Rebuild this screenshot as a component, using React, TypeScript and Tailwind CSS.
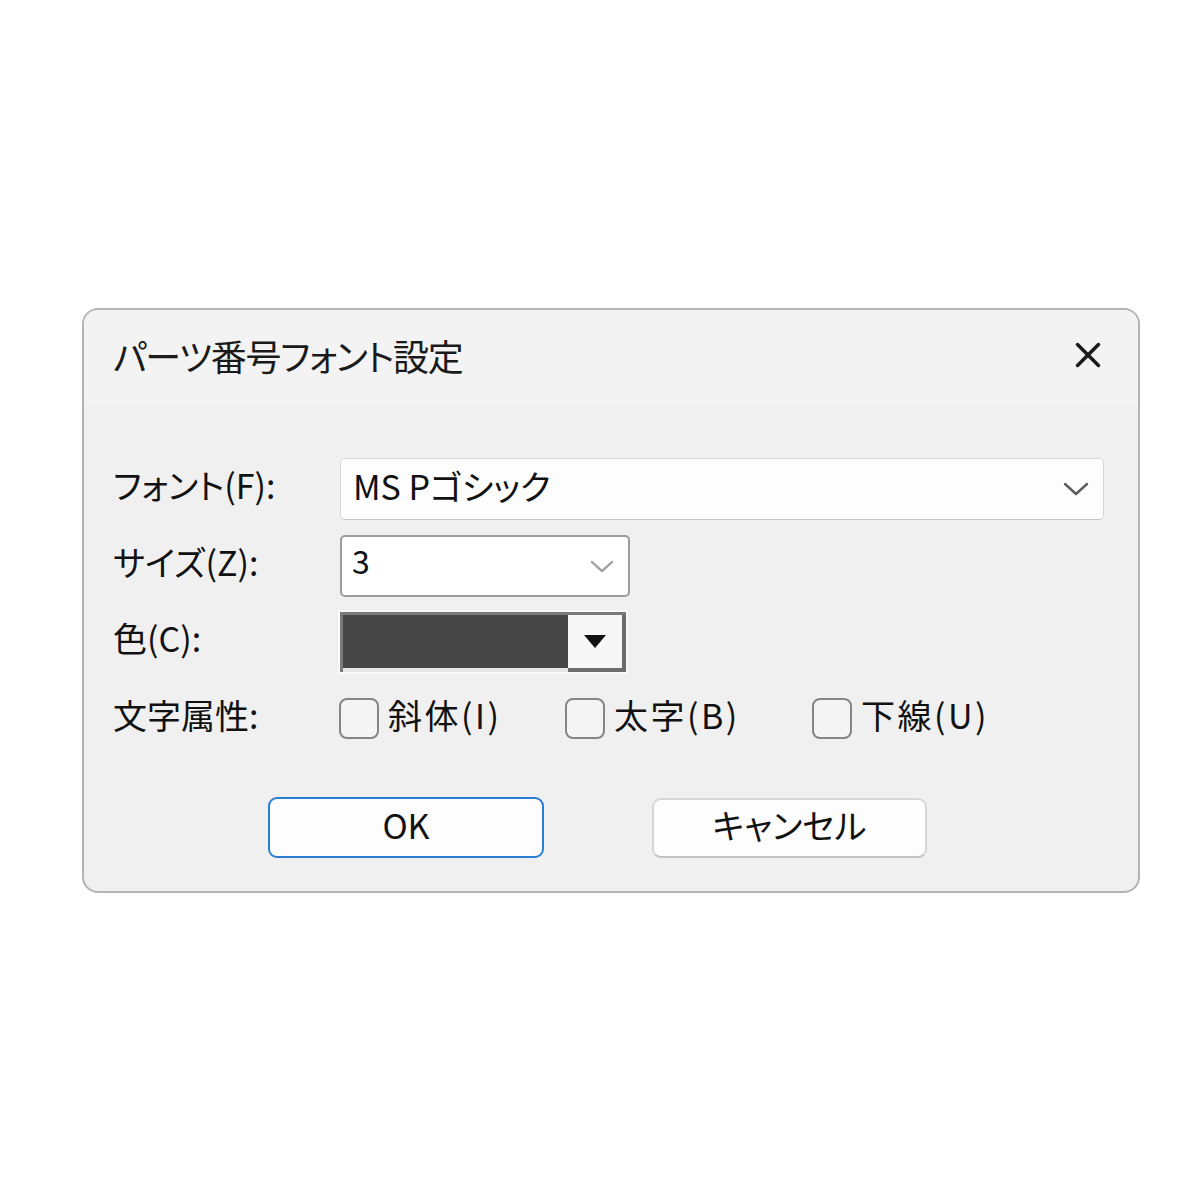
import { X } from 'lucide-react';

const font = { fontFamily: '"Noto Sans CJK JP", "Noto Sans", sans-serif', fontFeatureSettings: '"palt"' };

const Chevron = ({ className }: { className: string }) => (
  <svg viewBox="0 0 26 14" className={className} fill="none" stroke="currentColor" strokeWidth="2.4" strokeLinecap="round" strokeLinejoin="round">
    <path d="M2 2 L13 12 L24 2" />
  </svg>
);

const Check = ({ label, width }: { label: string; width: string }) => (
  <label className={`flex items-center gap-[9px] ${width}`}>
    <span className="w-[40px] h-[41px] rounded-[8px] border-2 border-[#858585] bg-[#f4f4f4]" />
    <span className="text-[34px] leading-none tracking-[2.5px] text-[#111] -translate-y-[4px]">{label}</span>
  </label>
);

export default function App() {
  return (
    <div className="min-h-screen bg-white pt-[308px] pl-[82px]" style={font}>
      <div className="w-[1058px] h-[585px] rounded-[16px] border-2 border-[#b4b4b4] bg-[#f0f0f0] overflow-hidden flex flex-col">
        {/* title bar */}
        <div className="h-[96px] bg-[#f3f3f3] flex items-center justify-between pl-[29px] pr-[30px]">
          <h1 className="text-[36px] leading-none text-[#1a1a1a] tracking-[-1.3px] -translate-y-[3px]">パーツ番号フォント設定</h1>
          <X className="w-[42px] h-[42px] text-[#1a1a1a] -translate-y-[3px] translate-x-[1px]" strokeWidth={2} />
        </div>

        <div className="flex-1 pl-[29px] pt-[52px]">
          {/* font */}
          <div className="flex items-center h-[62px]">
            <span className="w-[227px] text-[34px] leading-none text-[#111] -translate-y-[4px]">フォント(F):</span>
            <div className="w-[764px] h-[62px] rounded-[5px] border border-[#d8d8d8] border-b-[#c4c4c4] bg-[#fdfdfd] flex items-center justify-between pl-[12px] pr-[14px]">
              <span className="text-[34px] leading-none text-[#111] -translate-y-[3px]">MS Pゴシック</span>
              <Chevron className="w-[26px] h-[14px] text-[#5c5c5c]" />
            </div>
          </div>

          {/* size */}
          <div className="flex items-center h-[62px] mt-[15px]">
            <span className="w-[227px] text-[34px] leading-none text-[#111] -translate-y-[4px]">サイズ(Z):</span>
            <div className="w-[290px] h-[62px] rounded-[5px] border-2 border-[#9c9c9c] bg-white flex items-center justify-between pl-[10px] pr-[14px]">
              <span className="text-[32px] leading-none text-[#111] -translate-y-[6px]">3</span>
              <Chevron className="w-[24px] h-[13px] text-[#a0a0a0]" />
            </div>
          </div>

          {/* color */}
          <div className="flex items-center h-[64px] mt-[13px]">
            <span className="w-[225px] text-[34px] leading-none text-[#111] -translate-y-[4px]">色(C):</span>
            <div className="w-[290px] h-[64px] bg-[#fafafa] p-[2px]">
              <div className="h-full flex border-t-[3px] border-l-[3px] border-[#7a7a7a]">
                <div className="flex-1 flex flex-col">
                  <div className="flex-1 bg-[#464646]" />
                  <div className="h-[4px] bg-[#e6e6e6]" />
                </div>
                <div className="w-[58px] bg-[#f7f7f7] border-r-[4px] border-b-[4px] border-[#6d6d6d] flex items-center justify-center">
                  <svg viewBox="0 0 22 13" className="w-[22px] h-[13px]">
                    <path d="M0 0 H22 L11 13 Z" fill="#111" />
                  </svg>
                </div>
              </div>
            </div>
          </div>

          {/* attributes */}
          <div className="flex items-center h-[41px] mt-[24px]">
            <span className="w-[226px] text-[34px] leading-none text-[#111] -translate-y-[4px]">文字属性:</span>
            <div className="flex items-center">
              <Check label="斜体(I)" width="w-[226px]" />
              <Check label="太字(B)" width="w-[247px]" />
              <Check label="下線(U)" width="w-[200px]" />
            </div>
          </div>

          {/* buttons */}
          <div className="flex items-center mt-[58px] pl-[155px] gap-[108px]">
            <button className="w-[276px] h-[61px] rounded-[9px] border-2 border-[#2b7cd3] bg-[#fdfdfd] text-[34px] leading-none text-[#111]"><span className="inline-block -translate-y-[3px]">OK</span></button>
            <button className="w-[275px] h-[60px] rounded-[9px] border-2 border-[#d6d6d6] border-b-[#c2c2c2] bg-[#fdfdfd] text-[34px] leading-none text-[#111]"><span className="inline-block -translate-y-[3px]">キャンセル</span></button>
          </div>
        </div>
      </div>
    </div>
  );
}
